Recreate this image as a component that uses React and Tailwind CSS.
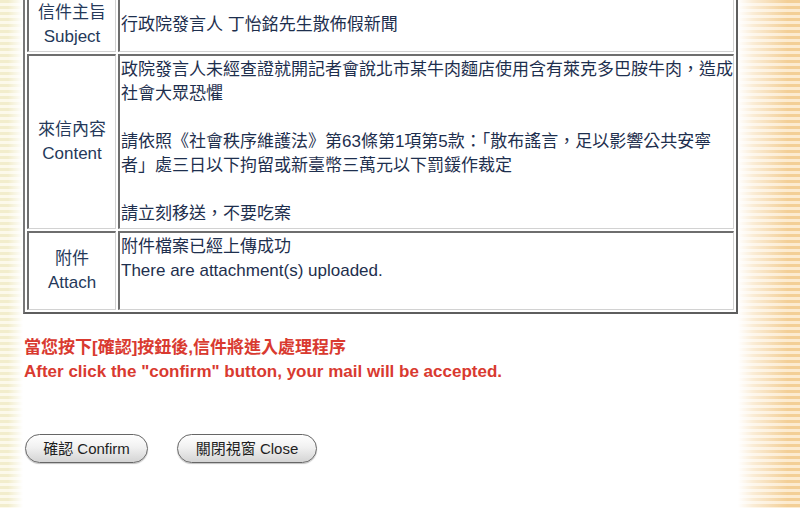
const cellBase =
  "border-t-2 border-l-2 border-b border-r border-t-[#6e6e6e] border-l-[#6e6e6e] border-b-[#d2d2d2] border-r-[#d2d2d2] bg-white py-[2px]";

function Row({ label, en, children, center }) {
  return (
    <tr>
      <td className={`${cellBase} w-[89px] text-center align-middle text-[#25395a] leading-[24px]`}>
        {label}
        <br />
        {en}
      </td>
      <td className={`${cellBase} pl-[1px] text-[#1e2f4e] leading-[24px] whitespace-nowrap ${center ? "align-middle" : "align-top"}`}>
        {children}
      </td>
    </tr>
  );
}

export default function App() {
  return (
    <div className="w-[800px] h-[508px] overflow-hidden bg-white flex font-['Liberation_Sans','Noto_Sans_CJK_TC',sans-serif] text-[17px]">
      <div className="w-[23px] shrink-0 bg-[image:linear-gradient(to_right,transparent_0%,transparent_35%,#ffffff_100%),repeating-linear-gradient(to_bottom,#f2edcc_0px,#f2edcc_3px,#fcf9ea_3px,#fcf9ea_6px)]" />

      <div className="w-[715px] shrink-0 flex flex-col">
        <table className="mt-[-6px] border-separate border-spacing-[2px] border-t border-l-2 border-b-2 border-r-2 border-t-[#bbbbbb] border-l-[#777777] border-b-[#5e5e5e] border-r-[#5e5e5e] w-[715px]">
          <tbody>
            <Row label="信件主旨" en="Subject" center>
              行政院發言人 丁怡銘先生散佈假新聞
            </Row>
            <Row label="來信內容" en="Content">
              政院發言人未經查證就開記者會說北市某牛肉麵店使用含有萊克多巴胺牛肉，造成
              <br />
              社會大眾恐懼
              <br />
              <br />
              請依照《社會秩序維護法》第63條第1項第5款：「散布謠言，足以影響公共安寧
              <br />
              者」處三日以下拘留或新臺幣三萬元以下罰鍰作裁定
              <br />
              <br />
              請立刻移送，不要吃案
            </Row>
            <Row label="附件" en="Attach">
              附件檔案已經上傳成功
              <br />
              There are attachment(s) uploaded.
              <br />
              <br />
            </Row>
          </tbody>
        </table>

        <div className="mt-[22px] pl-[1px] font-bold text-[#d93a30] leading-[24px]">
          <p>當您按下[確認]按鈕後,信件將進入處理程序</p>
          <p>After click the "confirm" button, your mail will be accepted.</p>
        </div>

        <div className="mt-[50px] pl-[2px] flex items-center gap-[29px]">
          <button className="w-[123px] h-[29px] rounded-full border border-[#666666] bg-[image:linear-gradient(to_bottom,#ffffff,#f1f1f1_45%,#d4d4d4)] shadow-[0_1px_1px_rgba(0,0,0,0.25)] text-[15px] text-[#1e1e1e] leading-none">
            確認 Confirm
          </button>
          <button className="w-[140px] h-[29px] rounded-full border border-[#666666] bg-[image:linear-gradient(to_bottom,#ffffff,#f1f1f1_45%,#d4d4d4)] shadow-[0_1px_1px_rgba(0,0,0,0.25)] text-[15px] text-[#1e1e1e] leading-none">
            關閉視窗 Close
          </button>
        </div>
      </div>

      <div className="flex-1 bg-[image:linear-gradient(to_right,#ffffff_0%,rgba(255,255,255,0.6)_25%,transparent_80%),repeating-linear-gradient(to_bottom,#f3cf96_0px,#f3cf96_3px,#fcebd0_3px,#fcebd0_6px)]" />
    </div>
  );
}
